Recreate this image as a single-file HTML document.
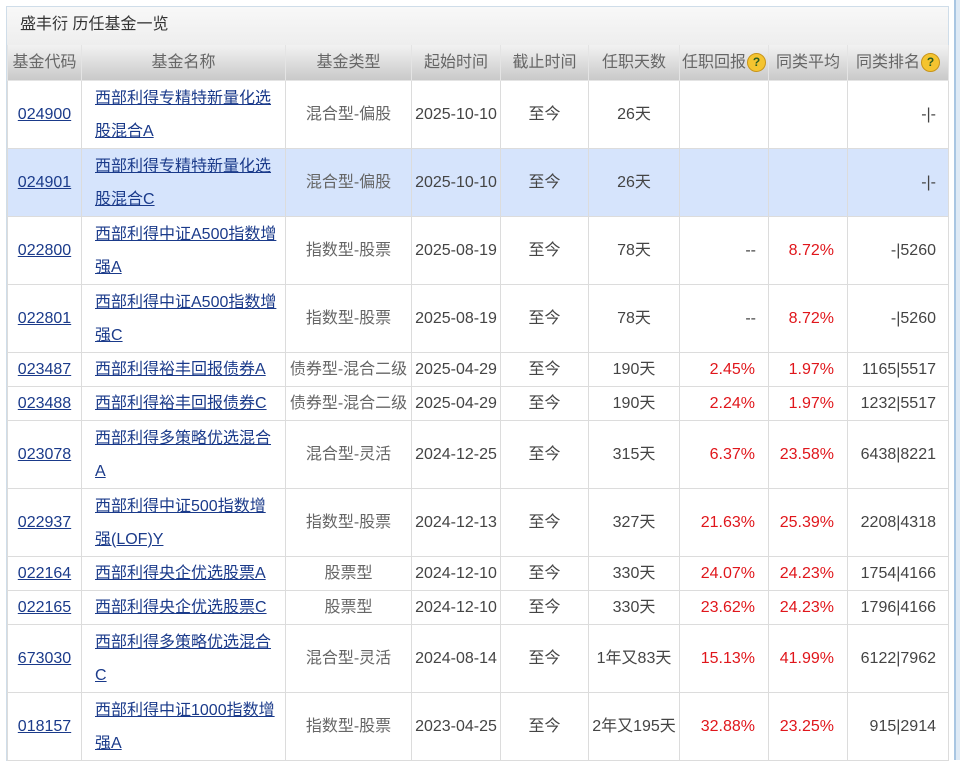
<!DOCTYPE html>
<html><head><meta charset="utf-8"><style>
body{margin:0;background:#fff;font-family:"Liberation Sans","Noto Sans CJK SC",sans-serif;width:960px;height:760px;overflow:hidden;position:relative}
.side{position:absolute;left:954px;top:0;width:6px;height:760px;background:#dfeaf5;border-left:2px solid #a9c6e2}
.box{position:absolute;left:6px;top:6px;width:941px;border:1px solid #cfdde9;border-bottom:none}
.title{height:38px;line-height:36px;padding-left:13px;font-size:16px;color:#333;background:linear-gradient(#f8f8f8,#eeeeee)}
table{border-collapse:collapse;table-layout:fixed;width:941px;font-size:16px}
th{height:35px;line-height:20px;font-weight:normal;color:#666;background:linear-gradient(#f2f2f2,#c9c9c9);border:1px solid #e4e4e4;border-top:none;padding:0;white-space:nowrap}
td{border:1px solid #dcdcdc;text-align:center;padding:0;color:#444;line-height:20px;overflow:hidden}
tr.t td{height:67px}tr.s td{height:33px}
td.n{text-align:left;padding-left:13px;padding-right:0;line-height:33px;white-space:nowrap}
a{color:#1a3a8a;text-decoration:underline}
td.g{color:#666}
td.r{color:#e0161b;text-align:right;padding-right:13px}
td.k{text-align:right;padding-right:12px}
tr.h td{background:#d6e4fc}
.q{display:inline-block;width:17px;height:17px;border-radius:50%;background:#f4c430;border:1px solid #c8941a;color:#2b5d20;font-size:12px;font-weight:bold;line-height:17px;text-align:center;vertical-align:middle;margin-left:1px}
</style></head><body>
<div class="side"></div>
<div class="box">
<div class="title">盛丰衍 历任基金一览</div>
<table>
<colgroup><col style="width:74px"><col style="width:204px"><col style="width:126px"><col style="width:89px"><col style="width:88px"><col style="width:91px"><col style="width:89px"><col style="width:79px"><col style="width:101px"></colgroup>
<tr><th>基金代码</th><th>基金名称</th><th>基金类型</th><th>起始时间</th><th>截止时间</th><th>任职天数</th><th>任职回报<span class="q">?</span></th><th>同类平均</th><th>同类排名<span class="q">?</span></th></tr>
<tr class="t"><td><a>024900</a></td><td class="n"><a>西部利得专精特新量化选<br>股混合A</a></td><td class="g">混合型-偏股</td><td>2025-10-10</td><td>至今</td><td>26天</td><td class="r"></td><td class="r"></td><td class="k">-|-</td></tr>
<tr class="t h"><td><a>024901</a></td><td class="n"><a>西部利得专精特新量化选<br>股混合C</a></td><td class="g">混合型-偏股</td><td>2025-10-10</td><td>至今</td><td>26天</td><td class="r"></td><td class="r"></td><td class="k">-|-</td></tr>
<tr class="t"><td><a>022800</a></td><td class="n"><a>西部利得中证A500指数增<br>强A</a></td><td class="g">指数型-股票</td><td>2025-08-19</td><td>至今</td><td>78天</td><td class="k">--</td><td class="r">8.72%</td><td class="k">-|5260</td></tr>
<tr class="t"><td><a>022801</a></td><td class="n"><a>西部利得中证A500指数增<br>强C</a></td><td class="g">指数型-股票</td><td>2025-08-19</td><td>至今</td><td>78天</td><td class="k">--</td><td class="r">8.72%</td><td class="k">-|5260</td></tr>
<tr class="s"><td><a>023487</a></td><td class="n"><a>西部利得裕丰回报债券A</a></td><td class="g" style="white-space:nowrap">债券型-混合二级</td><td>2025-04-29</td><td>至今</td><td>190天</td><td class="r">2.45%</td><td class="r">1.97%</td><td class="k">1165|5517</td></tr>
<tr class="s"><td><a>023488</a></td><td class="n"><a>西部利得裕丰回报债券C</a></td><td class="g" style="white-space:nowrap">债券型-混合二级</td><td>2025-04-29</td><td>至今</td><td>190天</td><td class="r">2.24%</td><td class="r">1.97%</td><td class="k">1232|5517</td></tr>
<tr class="t"><td><a>023078</a></td><td class="n"><a>西部利得多策略优选混合<br>A</a></td><td class="g">混合型-灵活</td><td>2024-12-25</td><td>至今</td><td>315天</td><td class="r">6.37%</td><td class="r">23.58%</td><td class="k">6438|8221</td></tr>
<tr class="t"><td><a>022937</a></td><td class="n"><a>西部利得中证500指数增<br>强(LOF)Y</a></td><td class="g">指数型-股票</td><td>2024-12-13</td><td>至今</td><td>327天</td><td class="r">21.63%</td><td class="r">25.39%</td><td class="k">2208|4318</td></tr>
<tr class="s"><td><a>022164</a></td><td class="n"><a>西部利得央企优选股票A</a></td><td class="g">股票型</td><td>2024-12-10</td><td>至今</td><td>330天</td><td class="r">24.07%</td><td class="r">24.23%</td><td class="k">1754|4166</td></tr>
<tr class="s"><td><a>022165</a></td><td class="n"><a>西部利得央企优选股票C</a></td><td class="g">股票型</td><td>2024-12-10</td><td>至今</td><td>330天</td><td class="r">23.62%</td><td class="r">24.23%</td><td class="k">1796|4166</td></tr>
<tr class="t"><td><a>673030</a></td><td class="n"><a>西部利得多策略优选混合<br>C</a></td><td class="g">混合型-灵活</td><td>2024-08-14</td><td>至今</td><td style="white-space:nowrap">1年又83天</td><td class="r">15.13%</td><td class="r">41.99%</td><td class="k">6122|7962</td></tr>
<tr class="t"><td><a>018157</a></td><td class="n"><a>西部利得中证1000指数增<br>强A</a></td><td class="g">指数型-股票</td><td>2023-04-25</td><td>至今</td><td style="white-space:nowrap">2年又195天</td><td class="r">32.88%</td><td class="r">23.25%</td><td class="k">915|2914</td></tr>
</table></div>
</body></html>
